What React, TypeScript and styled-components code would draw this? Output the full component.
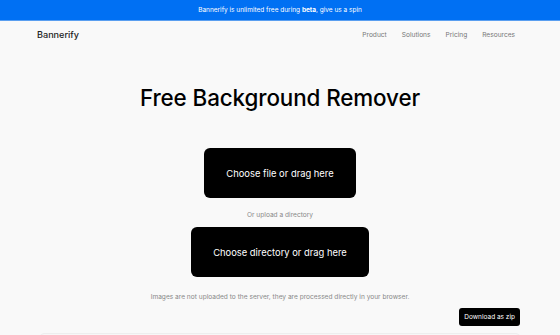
import React from "react";
import styled, { createGlobalStyle } from "styled-components";

const Global = createGlobalStyle`
  html, body { margin: 0; padding: 0; background: #f9f9f9; }
  body { font-family: Inter, "Liberation Sans", sans-serif; color: #111; overflow: hidden; }
`;

const Page = styled.div`
  height: 335px;
  overflow: hidden;
  display: flex;
  flex-direction: column;
`;

const Banner = styled.div`
  height: 20px;
  flex-shrink: 0;
  background: #0070f3;
  color: #fff;
  font-size: 6.5px;
  display: flex;
  align-items: center;
  justify-content: center;
  border-bottom: 1px solid #5a9ff0;
  b { font-weight: 700; }
`;

const Nav = styled.nav`
  display: flex;
  flex-shrink: 0;
  align-items: center;
  justify-content: space-between;
  height: 27px;
  padding: 0 45px 0 37px;
`;

const Logo = styled.div`
  font-size: 9.1px;
  font-weight: 500;
  color: #222;
`;

const Links = styled.div`
  display: flex;
  gap: 15px;
`;

const NavLink = styled.a`
  font-size: 6.6px;
  color: #777;
  text-decoration: none;
`;

const Main = styled.main`
  display: flex;
  flex-direction: column;
  align-items: center;
  padding-top: 35px;
`;

const Title = styled.h1`
  margin: 0;
  font-size: 22.4px;
  font-weight: 500;
  color: #000;
  letter-spacing: -0.1px;
  line-height: 30px;
`;

const DropButton = styled.button<{ $mt: number }>`
  margin-top: ${(p) => p.$mt}px;
  height: 50px;
  padding: 0 22px;
  background: #000;
  color: #fff;
  border: none;
  border-radius: 6px;
  font-family: inherit;
  font-size: 9.4px;
  cursor: pointer;
`;

const Hint = styled.p<{ $mt: number }>`
  margin: ${(p) => p.$mt}px 0 0;
  font-size: 6.6px;
  color: #888;
  line-height: 10px;
`;

const ZipButton = styled.button`
  position: fixed;
  right: 40px;
  bottom: 9px;
  height: 18px;
  padding: 0 5px;
  background: #000;
  color: #fff;
  border: none;
  border-radius: 3px;
  font-family: inherit;
  font-size: 6.5px;
`;

const NextSection = styled.div`
  flex-shrink: 0;
  margin: 31px 40px 0;
  height: 20px;
  border: 1px solid #eee;
  border-radius: 4px;
  background: #f7f7f7;
`;

export default function App() {
  return (
    <Page>
      <Global />
      <Banner>
        <span>
          Bannerify is unlimited free during <b>beta</b>, give us a spin
        </span>
      </Banner>
      <Nav>
        <Logo>Bannerify</Logo>
        <Links>
          <NavLink>Product</NavLink>
          <NavLink>Solutions</NavLink>
          <NavLink>Pricing</NavLink>
          <NavLink>Resources</NavLink>
        </Links>
      </Nav>
      <Main>
        <Title>Free Background Remover</Title>
        <DropButton $mt={35}>Choose file or drag here</DropButton>
        <Hint $mt={12}>Or upload a directory</Hint>
        <DropButton $mt={7}>Choose directory or drag here</DropButton>
        <Hint $mt={15}>Images are not uploaded to the server, they are processed directly in your browser.</Hint>
      </Main>
      <NextSection />
      <ZipButton>Download as zip</ZipButton>
    </Page>
  );
}
